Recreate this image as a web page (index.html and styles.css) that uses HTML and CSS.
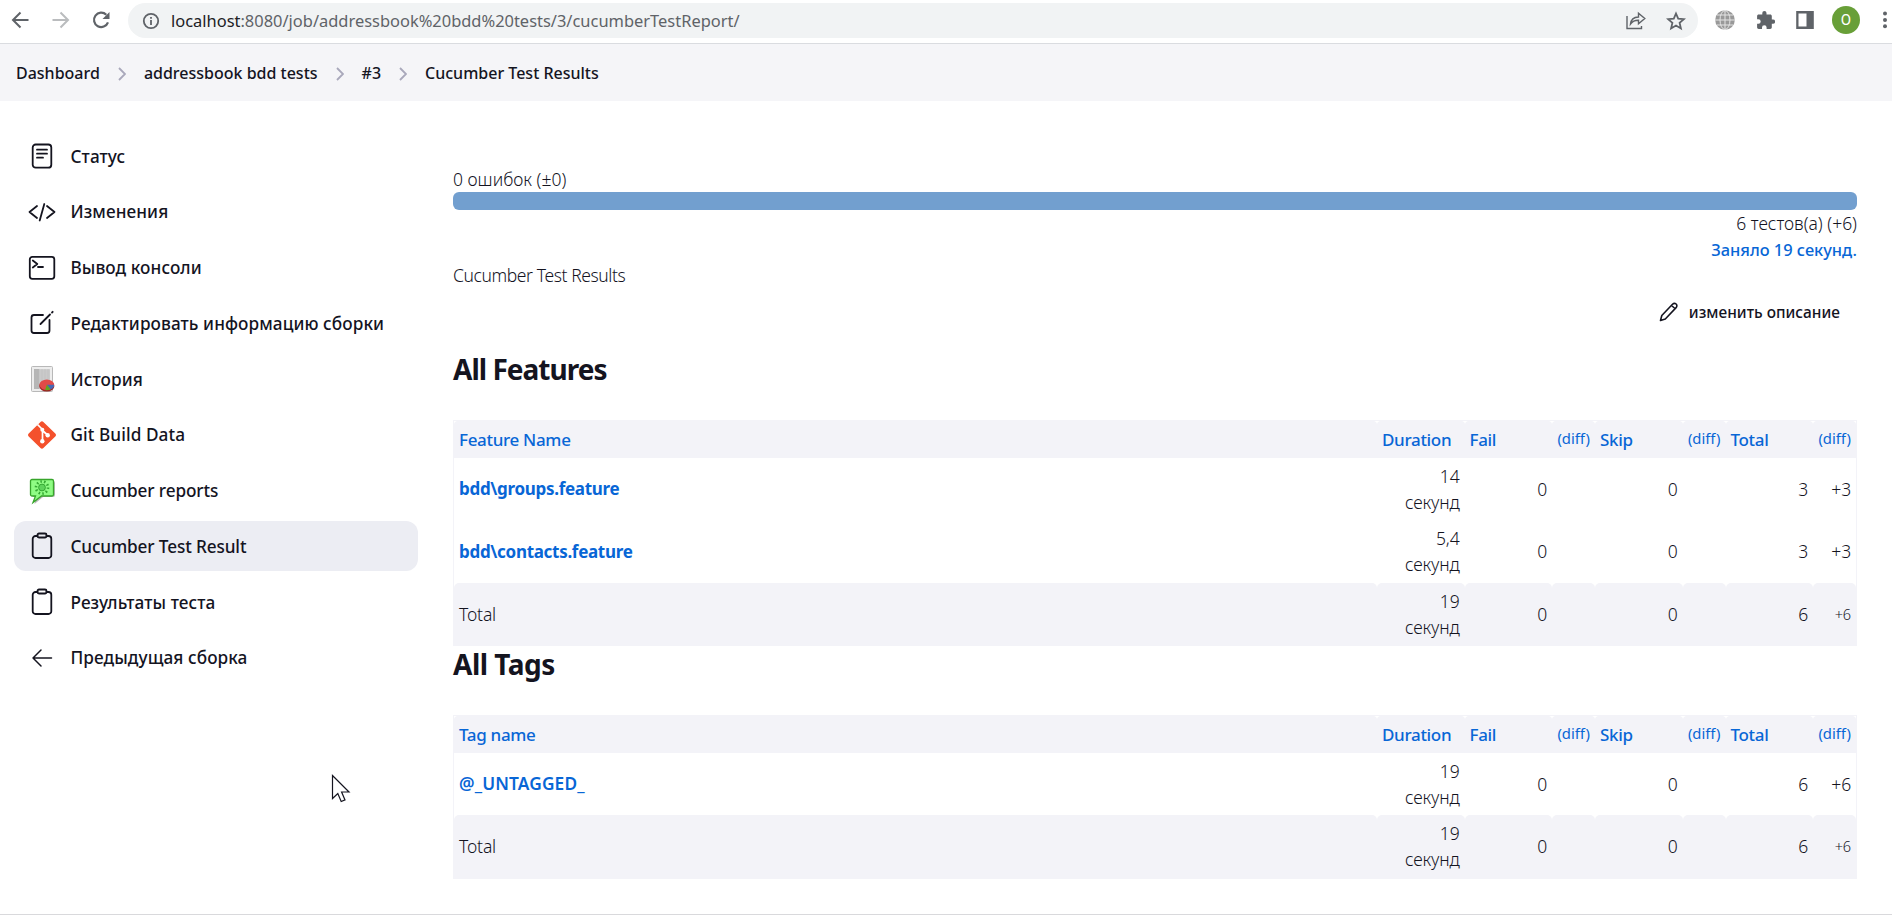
FILE: index.html
```
<!DOCTYPE html>
<html lang="ru">
<head>
<meta charset="utf-8">
<title>Cucumber Test Results</title>
<link rel="stylesheet" href="styles.css">
</head>
<body>
<div class="toolbar">
  <div class="nav">
    <svg width="20" height="20" viewBox="0 0 20 20" fill="none" stroke="#5f6368" stroke-width="2"><path d="M17.500 10H2.500M9.500 2.500L2 10l7.500 7.500"/></svg>
    <svg width="20" height="20" viewBox="0 0 20 20" fill="none" stroke="#babcbe" stroke-width="2"><path d="M1.500 10h15.500M9.500 2.500L17 10 9.500 17.500"/></svg>
    <svg width="20" height="20" viewBox="0 0 20 20"><path d="M15.300 4.700A7.200 7.200 0 1 0 17 12.300" fill="none" stroke="#5f6368" stroke-width="2.200"/><path d="M18.500 2v7h-7z" fill="#5f6368"/></svg>
  </div>
  <div class="omnibox">
    <svg class="info" width="18" height="18" viewBox="0 0 18 18"><circle cx="9" cy="9" r="7.200" fill="none" stroke="#5f6368" stroke-width="1.800"/><path d="M8.100 8h1.800v5H8.100zM8.100 5h1.800v1.800H8.100z" fill="#5f6368"/></svg>
    <div class="url"><b>localhost</b>:8080/job/addressbook%20bdd%20tests/3/cucumberTestReport/</div>
    <svg class="share" width="20" height="19" viewBox="0 0 20 19" fill="none" stroke="#5f6368" stroke-width="1.400"><path d="M1 5v12.500h14.500V15"/><path d="M4.500 13C5 8.500 8 6.200 12.500 6V2.200L18.800 7.500l-6.300 5.300V9.300C9 9.200 6.500 10.300 4.500 13z"/></svg>
    <svg width="20" height="20" viewBox="0 0 20 20" fill="none" stroke="#5f6368" stroke-width="1.800"><path d="M10 2.500l2.200 5.200 5.700.5-4.300 3.700 1.300 5.500-4.900-2.900-4.900 2.900 1.300-5.500L2.100 8.200l5.700-.5z"/></svg>
  </div>
  <div class="extensions">
    <svg width="20" height="20" viewBox="0 0 20 20"><circle cx="10" cy="10" r="9.800" fill="#999"/><g fill="none" stroke="#e4e4e4"><path d="M10 0v20M0 10h20M2 5h16M2 15h16"/><ellipse cx="10" cy="10" rx="5" ry="9.500"/></g></svg>
    <svg width="20" height="20" viewBox="0 0 20 20"><path d="M18 9.500h-1.200V6c0-.9-.7-1.600-1.600-1.600h-3.700V3.100a2.100 2.100 0 0 0-4.200 0v1.300H3.700C2.800 4.400 2.100 5.100 2.100 6v3.200h1.300a2.300 2.300 0 0 1 0 4.600H2.100v3.500c0 .9.700 1.600 1.600 1.600H7v-1.300a2.300 2.300 0 0 1 4.600 0v1.300h3.600c.9 0 1.600-.7 1.600-1.600v-3.600H18a2.100 2.100 0 0 0 0-4.200z" fill="#5f6368"/></svg>
    <svg width="20" height="20" viewBox="0 0 20 20"><path d="M1.200 1h17.600v18H1.200zM3.500 3.500v13h8v-13z" fill="#5f6368" fill-rule="evenodd"/></svg>
    <div class="avatar">O</div>
    <svg class="dots" width="6" height="20" viewBox="0 0 6 20" fill="#5f6368"><circle cx="3" cy="3.500" r="2"/><circle cx="3" cy="10" r="2"/><circle cx="3" cy="16.300" r="2"/></svg>
  </div>
</div>
<div class="breadcrumbs">
  <span>Dashboard</span><svg class="chev" viewBox="0 0 8 14"><path d="M1 1l6 6-6 6"/></svg>
  <span>addressbook bdd tests</span><svg class="chev" viewBox="0 0 8 14"><path d="M1 1l6 6-6 6"/></svg>
  <span>#3</span><svg class="chev" viewBox="0 0 8 14"><path d="M1 1l6 6-6 6"/></svg>
  <span>Cucumber Test Results</span>
</div>
<div class="page">
  <div class="tasks">
    <div class="task"><svg class="icon" viewBox="0 0 28 28"><rect x="4.700" y="2.500" width="18.600" height="23.200" rx="3"/><path d="M9 7.700h10M9 11.700h10M9 15.700h6"/></svg>Статус</div>
    <div class="task"><svg class="icon" viewBox="0 0 28 28"><path d="M9 8l-7.500 6L9 20M19 8l7.500 6-7.500 6M16.300 6l-4.600 16.500"/></svg>Изменения</div>
    <div class="task"><svg class="icon" viewBox="0 0 28 28"><rect x="1.800" y="2.800" width="24.500" height="22" rx="2.500"/><path d="M4.800 6.500l4.500 3.500-4.500 3.500M10 13h5"/></svg>Вывод консоли</div>
    <div class="task"><svg class="icon" viewBox="0 0 28 28"><path d="M15 6H6a2.500 2.500 0 0 0-2.500 2.500v13A2.500 2.500 0 0 0 6 24h13a2.500 2.500 0 0 0 2.500-2.500V11M12.500 15L22 5.500M24 3.500l.7-.7"/></svg>Редактировать информацию сборки</div>
    <div class="task"><svg class="art" viewBox="0 0 28 28"><rect x="3.500" y="1.500" width="21" height="25" rx="1" fill="#ededed" stroke="#b8b8b8"/><rect x="6" y="4" width="16" height="20" fill="#d0d0d0"/><rect x="6" y="4" width="5" height="20" fill="#b4b4b4"/><path d="M6 6h16M6 8h16M6 10h16M6 12h16M6 14h16M6 16h16M6 18h16M6 20h16M8 4v20M11 4v20M14 4v20M17 4v20M20 4v20" stroke="#bbb" stroke-width=".5"/><ellipse cx="18.800" cy="21" rx="7.600" ry="5.600" fill="#9e2423"/><ellipse cx="18.800" cy="19.800" rx="7.300" ry="5.200" fill="#e24a48"/><path d="M18.800 19.800h7.300a7 5 0 0 1-3.500 4.700z" fill="#4468b5"/><path d="M18.800 19.800l3.800 4.700a9 6 0 0 1-5.500.6z" fill="#62a71d"/></svg>История</div>
    <div class="task"><svg class="art" viewBox="0 0 28 28"><path d="M12.500.9a2 2 0 0 1 2.900 0l11.900 11.700a2 2 0 0 1 0 2.800L15.400 27.100a2 2 0 0 1-2.900 0L.7 15.400a2 2 0 0 1 0-2.800z" fill="#f4512c"/><path d="M9.500 3.500l5 5V20M14.500 9.500l5 4.500" fill="none" stroke="#fff" stroke-width="1.700"/><g fill="#fff"><circle cx="14.300" cy="8.700" r="2"/><circle cx="14.300" cy="20.300" r="2.200"/><circle cx="19.700" cy="14.300" r="2.200"/></g></svg>Git Build Data</div>
    <div class="task latin"><svg class="art" viewBox="0 0 28 28"><path d="M5 4h20a2 2 0 0 1 2 2v12a2 2 0 0 1-2 2H15l-8.500 7L8 20H5z" fill="#999" opacity=".7"/><path d="M4 2.500h20a1.500 1.500 0 0 1 1.500 1.500v13.500A1.500 1.500 0 0 1 24 19H13.500L5 25.500 7.500 19H4a1.500 1.500 0 0 1-1.500-1.500V4A1.500 1.500 0 0 1 4 2.500z" fill="#8ffc84" stroke="#37a52b" stroke-width="1.300"/><circle cx="14" cy="10.500" r="3.400" fill="#5ed35b" stroke="#35a832"/><circle cx="14" cy="10.500" r="6" fill="none" stroke="#35a832" stroke-width="2.600" stroke-dasharray="1.500 2.200"/></svg>Cucumber reports</div>
    <div class="task latin active"><svg class="icon" viewBox="0 0 28 28"><path d="M9.500 4H7.500A2.800 2.800 0 0 0 4.700 6.800v16.400A2.800 2.800 0 0 0 7.500 26h13a2.800 2.800 0 0 0 2.800-2.800V6.800A2.800 2.800 0 0 0 20.500 4h-2"/><rect x="9.500" y="1.500" width="9" height="4" rx="1.500"/></svg>Cucumber Test Result</div>
    <div class="task"><svg class="icon" viewBox="0 0 28 28"><path d="M9.500 4H7.500A2.800 2.800 0 0 0 4.700 6.800v16.400A2.800 2.800 0 0 0 7.500 26h13a2.800 2.800 0 0 0 2.800-2.800V6.800A2.800 2.800 0 0 0 20.500 4h-2"/><rect x="9.500" y="1.500" width="9" height="4" rx="1.500"/></svg>Результаты теста</div>
    <div class="task"><svg class="icon thin" viewBox="0 0 28 28"><path d="M23.500 14H5M13 6l-8 8 8 8"/></svg>Предыдущая сборка</div>
  </div>
  <div class="main">
    <div class="failures">0 ошибок (±0)</div>
    <div class="bar"></div>
    <div class="count">6 тестов(а) (+6)</div>
    <div class="took">Заняло 19 секунд.</div>
    <div class="caption">Cucumber Test Results</div>
    <div class="edit"><svg width="20" height="20" viewBox="0 0 20 20"><path d="M1.500 18.500l1.300-5L13.500 2.300c1-1 2.500-1.200 3.600-.3 1.100 1 1 2.600 0 3.600L6.300 17zM12.500 3.500l4 3.500"/></svg>изменить описание</div>
    <h1 class="first">All Features</h1>
    <table>
      <colgroup><col><col class="c-dur"><col class="c-num"><col class="c-diff"><col class="c-num"><col class="c-diff"><col class="c-num"><col class="c-diff"></colgroup>
      <thead><tr><th>Feature Name</th><th>Duration</th><th>Fail</th><th class="diff">(diff)</th><th>Skip</th><th class="diff">(diff)</th><th>Total</th><th class="diff">(diff)</th></tr></thead>
      <tbody>
        <tr><td class="name">bdd\groups.feature</td><td>14 <br>секунд</td><td>0</td><td></td><td>0</td><td></td><td>3</td><td>+3</td></tr>
        <tr><td class="name">bdd\contacts.feature</td><td>5,4 <br>секунд</td><td>0</td><td></td><td>0</td><td></td><td>3</td><td>+3</td></tr>
      </tbody>
      <tfoot><tr><td class="total">Total</td><td>19 <br>секунд</td><td>0</td><td></td><td>0</td><td></td><td>6</td><td class="small">+6</td></tr></tfoot>
    </table>
    <h1>All Tags</h1>
    <table>
      <colgroup><col><col class="c-dur"><col class="c-num"><col class="c-diff"><col class="c-num"><col class="c-diff"><col class="c-num"><col class="c-diff"></colgroup>
      <thead><tr><th>Tag name</th><th>Duration</th><th>Fail</th><th class="diff">(diff)</th><th>Skip</th><th class="diff">(diff)</th><th>Total</th><th class="diff">(diff)</th></tr></thead>
      <tbody>
        <tr><td class="name tag">@_UNTAGGED_</td><td>19 <br>секунд</td><td>0</td><td></td><td>0</td><td></td><td>6</td><td>+6</td></tr>
      </tbody>
      <tfoot><tr><td class="total">Total</td><td>19 <br>секунд</td><td>0</td><td></td><td>0</td><td></td><td>6</td><td class="small">+6</td></tr></tfoot>
    </table>
  </div>
</div>
<div class="footer"></div>
<svg class="cursor" width="20" height="30" viewBox="0 0 20 30"><path d="M1.500 1.500v23l5.300-5 3.400 8 3.800-1.600-3.400-7.900H18z" fill="#fff" stroke="#14141f" stroke-width="1.200"/></svg>
</body>
</html>
```
FILE: styles.css
```
* { box-sizing: border-box; }
body {
  margin: 0;
  height: 922px;
  overflow: hidden;
  display: flex;
  flex-direction: column;
  background: #fff;
  color: #14141f;
  font-family: "Noto Sans", sans-serif;
  font-size: 17.5px;
  font-weight: 330;
  white-space: nowrap;
}
svg { display: block; flex: none; }

.toolbar {
  flex: none;
  display: flex;
  align-items: center;
  height: 44px;
  padding-bottom: 4px;
  border-bottom: 1px solid #dadce0;
}
.nav { display: flex; gap: 20px; padding-left: 11px; width: 128px; }
.omnibox {
  display: flex;
  align-items: center;
  width: 1570px;
  height: 35px;
  margin-top: 2px;
  padding: 0 12px 0 14px;
  border-radius: 18px;
  background: #f1f3f4;
}
.url { flex: 1; margin-left: 11px; font-size: 16.450px; font-weight: 400; color: #5f6368; }
.url b { font-weight: 400; color: #202124; }
.share { margin-right: 20px; }
.extensions { display: flex; align-items: center; padding-left: 17px; }
.extensions svg { margin-right: 20px; }
.extensions .dots { margin: 0; }
.avatar {
  width: 28px;
  height: 28px;
  margin-right: 22px;
  margin-left: -3px;
  border-radius: 50%;
  background: #689f38;
  color: #fff;
  font: 400 15px/28px Roboto, sans-serif;
  text-align: center;
}

.breadcrumbs {
  flex: none;
  display: flex;
  align-items: center;
  height: 57px;
  padding: 1px 0 0 16px;
  background: #f5f5f8;
  font-size: 16px;
  font-weight: 500;
}
.chev { width: 8px; height: 14px; margin: 1px 18px 0; fill: none; stroke: #a9a8bb; stroke-width: 1.800; }

.page { display: flex; flex: none; height: 812px; }
.tasks { width: 453px; padding: 30px 35px 0 14px; }
.task {
  display: flex;
  align-items: center;
  height: 50px;
  margin-bottom: 5.750px;
  padding-left: 14px;
  border-radius: 12px;
  font-size: 17.200px;
  font-weight: 480;
  letter-spacing: .08px;
}
.task.latin { letter-spacing: -.12px; }
.task.active { background: #ecedf3; }
.task svg { width: 28px; height: 28px; margin-right: 14.500px; }
.icon { fill: none; stroke: #14141f; stroke-width: 1.800; stroke-linecap: round; stroke-linejoin: round; }
.icon.thin { stroke-width: 1.500; }

.main { width: 1404px; padding-top: 65px; }
.failures { height: 26px; line-height: 26px; }
.bar { height: 18px; border-radius: 6px; background: #729fcf; }
.count { height: 27px; line-height: 26px; text-align: right; }
.took { height: 26px; line-height: 26px; text-align: right; font-size: 16.400px; font-weight: 550; color: #0866d6; }
.caption { height: 26px; line-height: 25px; letter-spacing: -.4px; }
.edit {
  display: flex;
  justify-content: flex-end;
  align-items: center;
  gap: 10px;
  height: 46px;
  padding-right: 17px;
  font-size: 15.450px;
  font-weight: 480;
}
.edit svg { fill: none; stroke: #14141f; stroke-width: 1.600; stroke-linejoin: round; }
h1 { height: 69px; margin: 0; font-size: 28px; font-weight: 700; line-height: 37px; letter-spacing: -.5px; }
h1.first { height: 85px; line-height: 68px; letter-spacing: -.98px; }

table {
  width: 1404px;
  table-layout: fixed;
  border-collapse: separate;
  border-spacing: 0;
  border: 1px solid #f3f3f8;
}
.c-dur { width: 87.500px; }
.c-num { width: 87.500px; }
.c-diff { width: 43px; }
th {
  height: 36.500px;
  padding: 0 0 0 5px;
  border-radius: 4px 4px 0 0;
  background: #f3f3f8;
  color: #0866d6;
  font-size: 17px;
  font-weight: 500;
  letter-spacing: -.32px;
  text-align: left;
}
th.diff { padding: 0 5px 2px 0; font-size: 14.800px; font-weight: 400; letter-spacing: 0; text-align: right; }
td { height: 62.500px; padding: 0 5px; line-height: 26px; letter-spacing: -.15px; text-align: right; }
td.name { padding-top: 1px; color: #0866d6; font-size: 17px; font-weight: 700; letter-spacing: -.3px; text-align: left; }
td.tag { letter-spacing: .15px; font-weight: 620; font-size: 17.300px; }
td.total { text-align: left; }
td.small { font-size: 14.500px; }
tfoot td { background: #f3f3f8; border-radius: 5px 5px 0 0; }

.footer { flex: none; height: 9px; border-top: 1px solid #d9d9dc; margin-top: 1px; }
.cursor { position: absolute; left: 331px; top: 774px; }
```
